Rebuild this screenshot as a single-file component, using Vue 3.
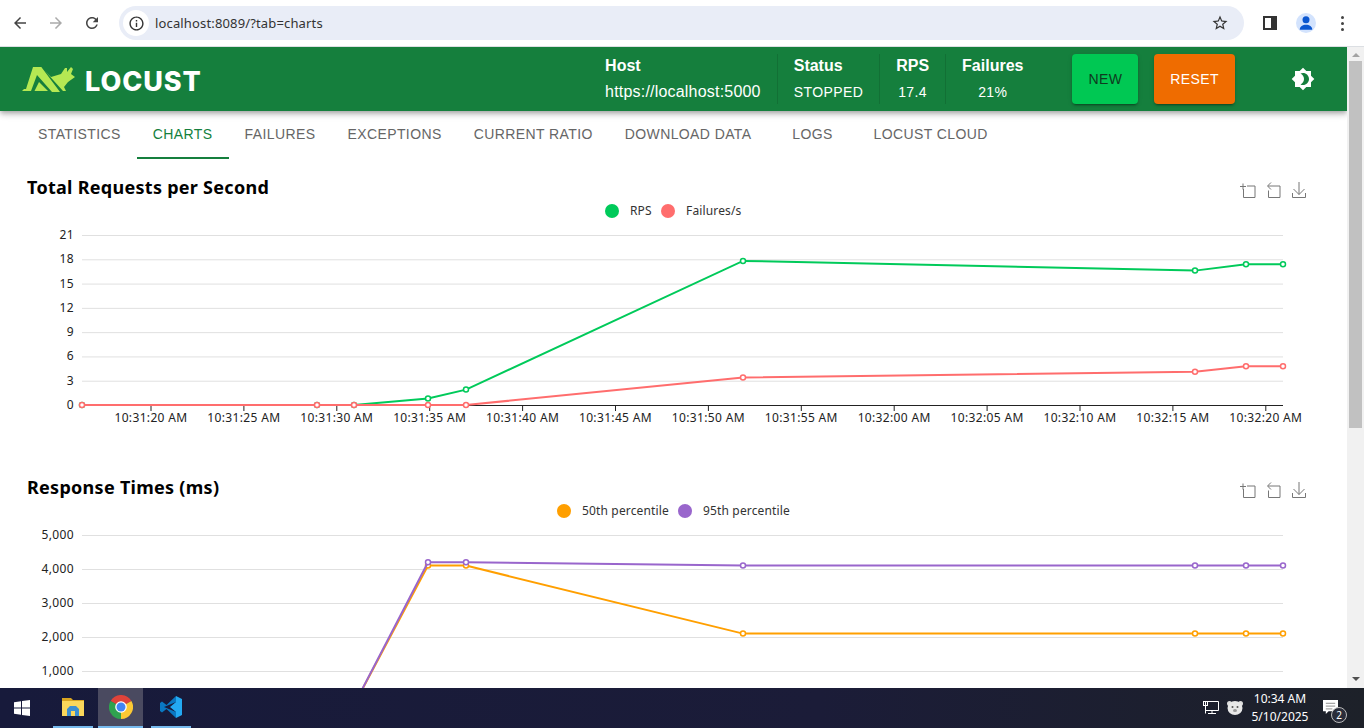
<script setup>
import { computed } from 'vue'

const tabs = ['STATISTICS', 'CHARTS', 'FAILURES', 'EXCEPTIONS', 'CURRENT RATIO', 'DOWNLOAD DATA', 'LOGS', 'LOCUST CLOUD']

const stats = [
  { label: 'Host', value: 'https://localhost:5000', cls: 'stat-host' },
  { label: 'Status', value: 'STOPPED', cls: 'stat-status' },
  { label: 'RPS', value: '17.4' },
  { label: 'Failures', value: '21%' }
]

// x position of every sample, same for both charts
const sampleX = [82, 317, 354, 428, 466, 743, 1195, 1246, 1283]
const timeTicks = ['10:31:20', '10:31:25', '10:31:30', '10:31:35', '10:31:40', '10:31:45', '10:31:50', '10:31:55', '10:32:00', '10:32:05', '10:32:10', '10:32:15', '10:32:20']

const PLOT_TOP = 76
const PLOT_BOTTOM = 246

const rawCharts = [
  {
    title: 'Total Requests per Second',
    max: 21,
    step: 3,
    series: [
      { name: 'RPS', color: '#00ca5a', legendX: 612, data: [0, 0, 0, 0.8, 1.9, 17.8, 16.6, 17.4, 17.4] },
      { name: 'Failures/s', color: '#ff6d6d', legendX: 668, data: [0, 0, 0, 0, 0, 3.4, 4.1, 4.8, 4.8] }
    ]
  },
  {
    title: 'Response Times (ms)',
    max: 5000,
    step: 1000,
    series: [
      { name: '50th percentile', color: '#ff9f00', legendX: 564, data: [0, 0, 0, 4100, 4100, 2100, 2100, 2100, 2100] },
      { name: '95th percentile', color: '#9966cc', legendX: 685, data: [0, 0, 0, 4200, 4200, 4100, 4100, 4100, 4100] }
    ]
  }
]

const charts = computed(() =>
  rawCharts.map((chart) => {
    const toY = (v) => PLOT_BOTTOM - (v / chart.max) * (PLOT_BOTTOM - PLOT_TOP)
    const grid = []
    for (let v = 0; v <= chart.max; v += chart.step) {
      grid.push({ y: toY(v), label: v.toLocaleString('en-US') })
    }
    return {
      ...chart,
      grid,
      series: chart.series.map((s) => {
        const points = s.data.map((v, i) => ({ x: sampleX[i], y: toY(v) }))
        return { ...s, points, line: points.map((p) => `${p.x},${p.y}`).join(' ') }
      })
    }
  })
)

const tickX = (i) => 151 + i * 92.9
</script>

<template>
  <div class="screen">
    <!-- Browser toolbar -->
    <div class="browser">
      <div class="nav-buttons">
        <svg class="nav-icon" viewBox="0 0 24 24"><path fill="#444" d="M20 11H7.83l5.59-5.59L12 4l-8 8 8 8 1.41-1.41L7.83 13H20v-2z" /></svg>
        <svg class="nav-icon" viewBox="0 0 24 24"><path fill="#aaa" d="M12 4l-1.41 1.41L16.17 11H4v2h12.17l-5.58 5.59L12 20l8-8z" /></svg>
        <svg class="nav-icon" viewBox="0 0 24 24"><path fill="#444" d="M17.65 6.35C16.2 4.9 14.21 4 12 4c-4.42 0-7.99 3.58-7.99 8s3.57 8 7.99 8c3.73 0 6.84-2.55 7.73-6h-2.08c-.82 2.33-3.04 4-5.65 4-3.31 0-6-2.69-6-6s2.69-6 6-6c1.66 0 3.14.69 4.22 1.78L13 11h7V4l-2.35 2.35z" /></svg>
      </div>
      <div class="omnibox">
        <span class="site-info">
          <svg viewBox="0 0 24 24"><path fill="#333" d="M11 7h2v2h-2zm0 4h2v6h-2zm1-9C6.48 2 2 6.48 2 12s4.48 10 10 10 10-4.48 10-10S17.52 2 12 2zm0 18c-4.41 0-8-3.59-8-8s3.59-8 8-8 8 3.59 8 8-3.59 8-8 8z" /></svg>
        </span>
        <span class="url">localhost:8089/?tab=charts</span>
        <svg class="star" viewBox="0 0 24 24"><path fill="#333" d="M22 9.24l-7.19-.62L12 2 9.19 8.63 2 9.24l5.46 4.73L5.82 21 12 17.27 18.18 21l-1.63-7.03L22 9.24zM12 15.4l-3.76 2.27 1-4.28-3.32-2.88 4.38-.38L12 6.1l1.71 4.04 4.38.38-3.32 2.88 1 4.28L12 15.4z" /></svg>
      </div>
      <div class="browser-actions">
        <svg class="side-panel" viewBox="0 0 14 14"><rect x="1" y="1" width="12" height="12" fill="#fff" stroke="#333" stroke-width="2" /><rect x="8" y="1" width="5" height="12" fill="#333" /></svg>
        <span class="avatar">
          <svg viewBox="0 0 24 24"><circle cx="12" cy="8" r="4.2" fill="#0b57d0" /><path fill="#0b57d0" d="M4.5 20c0-4 3.5-6 7.5-6s7.5 2 7.5 6z" /></svg>
        </span>
        <span class="kebab"><i></i><i></i><i></i></span>
      </div>
    </div>

    <div class="viewport">
      <div class="page">
        <!-- App header -->
        <header class="app-header">
          <div class="logo">
            <svg class="logo-mark" viewBox="0 0 54 28">
              <path fill="#b5e853" d="M0 26 L2 24 L4 24 L11 2 L19.300 2 L38 27 L30 27 L15 10 L9 26 Z" />
              <path fill="#b5e853" d="M12.500 26 L17 17 L26 26 Z" />
              <path fill="#b5e853" d="M23 6 L29 12 L39 9 L43 3 L45 3 L45 7 L49 2 L51 4 L49 9 L53 12 L46 17 L42 22 L44 26 L41 26 Z" />
            </svg>
            <span class="logo-text">LOCUST</span>
          </div>
          <div class="header-right">
            <div class="stats">
              <div v-for="s in stats" :key="s.label" class="stat" :class="s.cls">
                <span class="stat-label">{{ s.label }}</span>
                <span class="stat-value">{{ s.value }}</span>
              </div>
            </div>
            <button class="btn btn-new">NEW</button>
            <button class="btn btn-reset">RESET</button>
            <span class="theme-toggle">
              <svg viewBox="0 0 24 24"><path fill="#fff" d="M20 8.69V4h-4.69L12 .69 8.69 4H4v4.69L.69 12 4 15.31V20h4.69L12 23.31 15.31 20H20v-4.69L23.31 12 20 8.69zM12 18c-.89 0-1.74-.2-2.5-.55C11.56 16.5 13 14.42 13 12s-1.44-4.5-3.5-5.45C10.26 6.2 11.11 6 12 6c3.31 0 6 2.69 6 6s-2.69 6-6 6z" /></svg>
            </span>
          </div>
        </header>

        <!-- Tabs -->
        <nav class="tabs">
          <div v-for="t in tabs" :key="t" class="tab" :class="{ active: t === 'CHARTS' }">{{ t }}</div>
        </nav>

        <!-- Charts -->
        <svg v-for="chart in charts" :key="chart.title" class="chart" viewBox="0 0 1347 300">
          <text class="chart-title" x="27" y="35">{{ chart.title }}</text>

          <g class="chart-tools" fill="none" stroke="#777" stroke-width="1">
            <path d="M1240 27.500h6m-3-3v6M1243.500 30v8.500h11.500v-11.500h-8" />
            <path d="M1271 23.500l-3.500 3.500 3.500 3.500M1268 27h12v11.500h-11.500v-7" />
            <path d="M1299 23v12.500M1293.500 30l5.500 5.500 5.500-5.500M1292.500 34v4.500h13v-4.500" />
          </g>

          <g v-for="s in chart.series" :key="s.name">
            <circle :cx="s.legendX" cy="52" r="7" :fill="s.color" />
            <text class="legend-label" :x="s.legendX + 18" y="56">{{ s.name }}</text>
          </g>

          <g v-for="g in chart.grid" :key="g.label">
            <line x1="82" x2="1283" :y1="g.y + 0.5" :y2="g.y + 0.5" stroke="#e0e0e0" />
            <text class="axis-label" x="74" :y="g.y + 4" text-anchor="end">{{ g.label }}</text>
          </g>

          <line x1="82" x2="1283" y1="246.500" y2="246.500" stroke="#222" />
          <g v-for="(t, i) in timeTicks" :key="t">
            <line :x1="tickX(i)" :x2="tickX(i)" y1="247" y2="252" stroke="#222" />
            <text class="axis-label" :x="tickX(i)" y="263" text-anchor="middle">{{ t }} AM</text>
          </g>

          <g v-for="s in chart.series" :key="s.name + '-line'">
            <polyline :points="s.line" fill="none" :stroke="s.color" stroke-width="2" />
            <circle v-for="p in s.points" :key="p.x" :cx="p.x" :cy="p.y" r="2.500" fill="#fff" :stroke="s.color" stroke-width="1.500" />
          </g>
        </svg>
      </div>

      <!-- Scrollbar -->
      <div class="scrollbar">
        <span class="arrow arrow-up"></span>
        <span class="thumb"></span>
        <span class="arrow arrow-down"></span>
      </div>
    </div>

    <!-- Windows taskbar -->
    <footer class="taskbar">
      <svg class="win-logo" viewBox="0 0 16 16">
        <path fill="#fff" d="M0 2.300 L7 1.300 V7.600 H0 Z M8 1.100 L16 0 V7.600 H8 Z M0 8.400 H7 V14.700 L0 13.700 Z M8 8.400 H16 V16 L8 14.900 Z" />
      </svg>
      <div class="task-item task-folder">
        <svg viewBox="0 0 24 24">
          <path fill="#d9a520" d="M1 3h9l2 2h11v4H1z" />
          <path fill="#fbd75b" d="M1 6h22v15H1z" />
          <path fill="#3d8fd1" d="M6 21v-7l3-3h6l3 3v7h-4v-5h-4v5z" />
        </svg>
      </div>
      <div class="task-item task-chrome">
        <svg viewBox="0 0 24 24">
          <path fill="#e0433a" d="M12 12 L1.600 6 A12 12 0 0 1 22.400 6 Z" />
          <path fill="#2fa24f" d="M12 12 L1.600 6 A12 12 0 0 0 12 24 Z" />
          <path fill="#fcc934" d="M12 12 L22.400 6 A12 12 0 0 1 12 24 Z" />
          <circle cx="12" cy="12" r="5.800" fill="#fff" />
          <circle cx="12" cy="12" r="4.500" fill="#4285f4" />
        </svg>
      </div>
      <div class="task-item task-code">
        <svg viewBox="0 0 24 24">
          <path fill="#0a78c2" d="M17 1 L7.500 10 L3 6.500 L1 8 V16 L3 17.500 L7.500 14 L17 23 L17 17 L5 12 L17 7 Z" />
          <path fill="#23a9f2" d="M17 1 L23 4 V20 L17 23 L17 17 L11 12 L17 7 Z" />
        </svg>
      </div>

      <div class="tray">
        <svg class="tray-net" viewBox="0 0 16 14" fill="none" stroke="#fff">
          <path d="M2.500 4.500V0.500h13v9h-13M9 9.500v3M5 12.500h8M2.500 5v7.500" />
          <rect x="0.500" y="0.500" width="4" height="4" />
        </svg>
        <svg class="tray-bear" viewBox="0 0 16 16">
          <circle cx="2.500" cy="3.500" r="2.500" fill="#ddd" />
          <circle cx="13.500" cy="3.500" r="2.500" fill="#ddd" />
          <ellipse cx="8" cy="8" rx="7.500" ry="7" fill="#e8e8e8" />
          <circle cx="5.500" cy="7" r="1" fill="#555" />
          <circle cx="10.500" cy="7" r="1" fill="#555" />
          <ellipse cx="8" cy="10.500" rx="2" ry="1.500" fill="#999" />
        </svg>
        <div class="clock">
          <span>10:34 AM</span>
          <span>5/10/2025</span>
        </div>
        <div class="notify">
          <svg viewBox="0 0 16 16">
            <path fill="#fff" d="M0 0h16v12H6l-3 3v-3H0z" />
            <path stroke="#888" d="M3 3.500h10M3 6.500h10M3 9.500h7" />
          </svg>
          <span class="notify-badge">2</span>
        </div>
      </div>
    </footer>
  </div>
</template>

<style scoped>
.screen {
  width: 1364px;
  height: 728px;
  display: flex;
  flex-direction: column;
  overflow: hidden;
  background: #fff;
  font-family: "Liberation Sans", Arial, sans-serif;
}

/* Browser toolbar */
.browser {
  height: 46px;
  flex: none;
  display: flex;
  align-items: center;
  background: #fff;
  border-bottom: 1px solid #dcdfe3;
}

.nav-buttons {
  display: flex;
  gap: 18px;
  width: 119px;
  padding-left: 11px;
  box-sizing: border-box;
}

.nav-icon {
  width: 18px;
  height: 18px;
}

.omnibox {
  width: 1125px;
  height: 34px;
  display: flex;
  align-items: center;
  background: #e9edf7;
  border-radius: 17px;
  padding: 0 15px 0 4px;
  box-sizing: border-box;
}

.site-info {
  width: 26px;
  height: 26px;
  display: flex;
  align-items: center;
  justify-content: center;
  background: #fff;
  border-radius: 50%;
}

.site-info svg {
  width: 17px;
  height: 17px;
}

.url {
  margin-left: 6px;
  flex: 1;
  font-family: "Noto Sans", sans-serif;
  font-size: 13px;
  letter-spacing: 0.15px;
  color: #333;
}

.star {
  width: 18px;
  height: 18px;
}

.browser-actions {
  flex: 1;
  display: flex;
  align-items: center;
  padding-left: 19px;
}

.side-panel {
  width: 14px;
  height: 14px;
}

.avatar {
  width: 20px;
  height: 20px;
  margin-left: 19px;
  background: #d3e3fd;
  border-radius: 50%;
}

.avatar svg {
  display: block;
  width: 20px;
  height: 20px;
}

.kebab {
  margin-left: 25px;
  display: flex;
  flex-direction: column;
  gap: 3px;
}

.kebab i {
  width: 3px;
  height: 3px;
  background: #444;
  border-radius: 50%;
}

/* Page + scrollbar */
.viewport {
  flex: 1;
  min-height: 0;
  display: flex;
}

.page {
  flex: 1;
  min-width: 0;
  overflow: hidden;
}

.scrollbar {
  width: 17px;
  flex: none;
  display: flex;
  flex-direction: column;
  align-items: center;
  background: #f1f1f1;
}

.thumb {
  width: 13px;
  height: 367px;
  background: #c1c1c1;
  margin-top: 4px;
}

.arrow {
  width: 0;
  height: 0;
  border-left: 4px solid transparent;
  border-right: 4px solid transparent;
}

.arrow-up {
  margin-top: 6px;
  border-bottom: 4px solid #a3a3a3;
}

.arrow-down {
  margin-top: auto;
  margin-bottom: 7px;
  border-top: 4px solid #505050;
}

/* App header */
.app-header {
  position: relative;
  z-index: 2;
  height: 64px;
  display: flex;
  align-items: center;
  justify-content: space-between;
  padding: 0 24px 0 22px;
  background: #157f3d;
  color: #fff;
  box-shadow: 0 2px 4px -1px rgba(0, 0, 0, 0.2), 0 4px 5px rgba(0, 0, 0, 0.14), 0 1px 10px rgba(0, 0, 0, 0.12);
}

.logo {
  display: flex;
  align-items: center;
  gap: 9px;
}

.logo-mark {
  width: 54px;
  height: 28px;
}

.logo-text {
  font-family: Inter, sans-serif;
  font-weight: 800;
  font-size: 27px;
  letter-spacing: 0.9px;
  line-height: 28px;
  padding-top: 5px;
}

.header-right {
  display: flex;
  align-items: center;
}

.stats {
  display: flex;
  height: 50px;
  margin-right: 17px;
}

.stat {
  display: flex;
  flex-direction: column;
  align-items: center;
  justify-content: space-between;
  padding: 0 16px;
  border-right: 1px solid #127035;
}

.stat:last-child {
  border-right: 0;
}

.stat-host,
.stat-status {
  align-items: flex-start;
}

.stat-label {
  font-weight: 700;
  font-size: 16px;
  line-height: 24px;
}

.stat-value {
  font-size: 14px;
  letter-spacing: 0.4px;
  line-height: 24px;
}

.stat-host .stat-value {
  font-size: 16px;
  letter-spacing: 0.2px;
}

.btn {
  height: 50px;
  margin-left: 16px;
  padding: 0 16px;
  border: 0;
  border-radius: 4px;
  font-family: "Liberation Sans", Arial, sans-serif;
  font-size: 14px;
  letter-spacing: 0.4px;
  box-shadow: 0 3px 1px -2px rgba(0, 0, 0, 0.2), 0 2px 2px rgba(0, 0, 0, 0.14), 0 1px 5px rgba(0, 0, 0, 0.12);
}

.btn-new {
  background: #00c853;
  color: #0f3a20;
}

.btn-reset {
  background: #ef6c00;
  color: #fff;
}

.theme-toggle {
  width: 40px;
  height: 40px;
  margin-left: 48px;
  display: flex;
  align-items: center;
  justify-content: center;
}

.theme-toggle svg {
  width: 24px;
  height: 24px;
}

/* Tabs */
.tabs {
  height: 48px;
  display: flex;
  padding-left: 22px;
}

.tab {
  min-width: 90px;
  box-sizing: border-box;
  padding: 0 16px 2px;
  display: flex;
  align-items: center;
  justify-content: center;
  font-size: 14px;
  letter-spacing: 0.4px;
  color: #666;
}

.tab.active {
  color: #157f3d;
  box-shadow: inset 0 -2px 0 #157f3d;
}

/* Charts */
.chart {
  display: block;
  width: 1347px;
  height: 300px;
  font-family: "Noto Sans", sans-serif;
}

.chart-title {
  font-size: 18px;
  font-weight: 700;
  letter-spacing: 0.28px;
  fill: #000;
}

.legend-label {
  font-size: 12px;
  letter-spacing: 0.15px;
  fill: #333;
}

.axis-label {
  font-size: 12px;
  letter-spacing: 0.35px;
  fill: #222;
}

/* Taskbar */
.taskbar {
  height: 40px;
  flex: none;
  display: flex;
  align-items: stretch;
  background: linear-gradient(90deg, #171a3b, #1b1c38 60%, #1d2129);
  color: #fff;
}

.win-logo {
  width: 16px;
  height: 16px;
  margin: 12px 23px 0 14px;
}

.task-item {
  height: 40px;
  box-sizing: border-box;
  display: flex;
  align-items: center;
  justify-content: center;
  border-bottom: 2px solid #76b9ed;
}

.task-item svg {
  width: 24px;
  height: 24px;
}

.task-folder {
  width: 40px;
}

.task-chrome {
  width: 45px;
  margin-left: 5px;
  background: #4a4a60;
}

.task-code {
  width: 40px;
  margin-left: 8px;
}

.tray {
  margin-left: auto;
  display: flex;
  align-items: center;
}

.tray-net {
  width: 16px;
  height: 14px;
}

.tray-bear {
  width: 16px;
  height: 16px;
  margin-left: 8px;
}

.clock {
  width: 74px;
  margin-left: 0;
  display: flex;
  flex-direction: column;
  align-items: center;
  font-family: "Noto Sans", sans-serif;
  font-size: 12px;
  line-height: 18px;
}

.notify {
  position: relative;
  width: 24px;
  height: 24px;
  margin: 0 17px 0 6px;
}

.notify svg {
  width: 15px;
  height: 15px;
  position: absolute;
  left: 0;
  top: 4px;
}

.notify-badge {
  position: absolute;
  left: 8px;
  top: 11px;
  width: 16px;
  height: 16px;
  box-sizing: border-box;
  border-radius: 50%;
  background: #2a2d3a;
  border: 1px solid #bbb;
  font-family: "Noto Sans", sans-serif;
  font-size: 10px;
  line-height: 14px;
  text-align: center;
}
</style>
